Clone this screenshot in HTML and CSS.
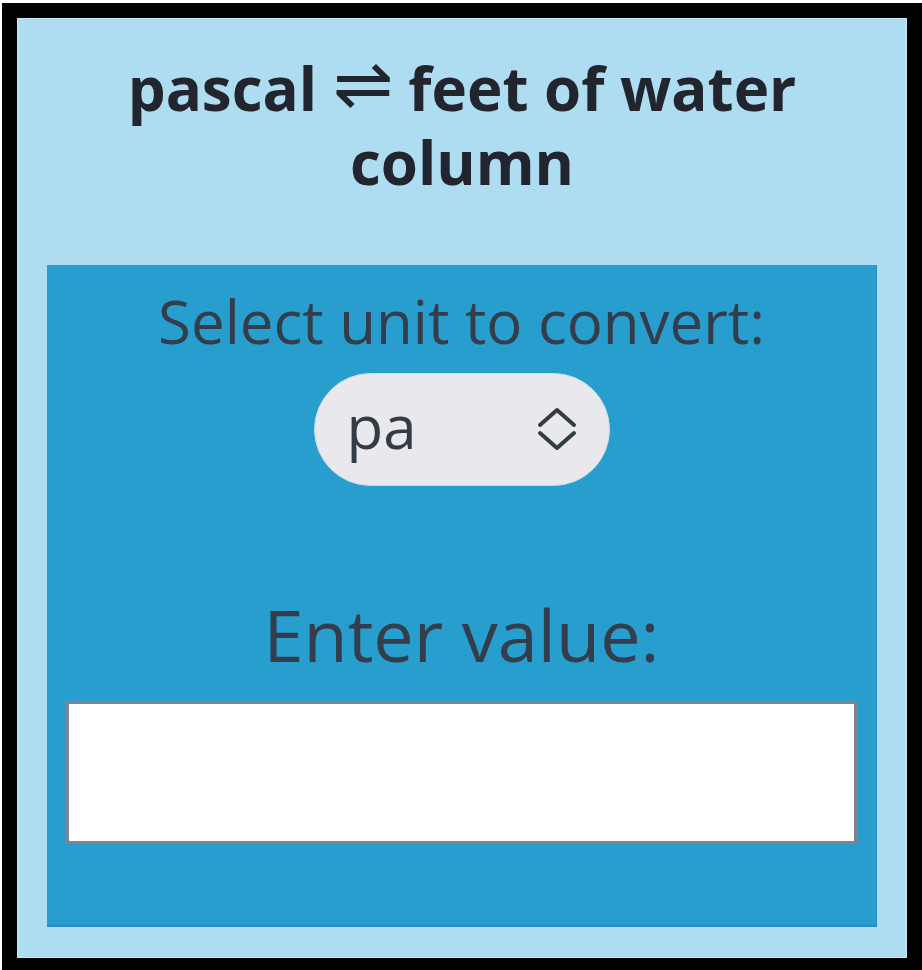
FILE: index.html
```html
<!DOCTYPE html>
<html lang="en">
<head>
<meta charset="utf-8">
<title>pascal ⇌ feet of water column</title>
<link rel="stylesheet" href="styles.css">
</head>
<body>
<div class="frame">
  <h1 class="title">pascal <span class="arrow">⇌</span> feet of water column</h1>
  <div class="panel">
    <label class="label-unit" for="unit">Select unit to convert:</label>
    <div class="select-wrap">
      <select id="unit" class="unit-select">
        <option>pa</option>
        <option>ftH2O</option>
      </select>
      <svg class="chevrons" width="40" height="44" viewBox="0 0 40 44" aria-hidden="true">
        <path d="M3 18 L20 3 L37 18" fill="none" stroke="#333b45" stroke-width="4" stroke-linecap="round" stroke-linejoin="round"/>
        <path d="M3 26 L20 41 L37 26" fill="none" stroke="#333b45" stroke-width="4" stroke-linecap="round" stroke-linejoin="round"/>
      </svg>
    </div>
    <label class="label-value" for="value">Enter value:</label>
    <input id="value" class="value-input" type="text">
  </div>
</div>
</body>
</html>
```
FILE: styles.css
```css
html, body {
  margin: 0;
  padding: 0;
  background: #ffffff;
}
body {
  font-family: "Open Sans", "Noto Sans", sans-serif;
  padding: 3px 0 0 2px;
  overflow: hidden;
}
.frame {
  box-sizing: border-box;
  width: 922px;
  height: 970px;
  border: 15px solid #000;
  border-right-width: 17px;
  background: #aedcf0;
  padding: 33px 30px 31px 30px;
  display: flex;
  flex-direction: column;
  box-shadow: inset 0 0 0 1px #c6e9f8;
}
.title {
  margin: 0;
  text-align: center;
  font-weight: 700;
  font-size: 60px;
  line-height: 74px;
  color: #22252d;
}
.arrow {
  font-family: "DejaVu Sans", sans-serif;
  font-weight: 200;
  font-size: 72px;
  line-height: 0;
  vertical-align: 2px;
}
.panel {
  margin-top: 66px;
  flex: 1;
  background: #279ecd;
  border-right: 1px solid #2a8cc0;
  border-bottom: 2px solid #2a8cc0;
  padding: 21px 0 0 0;
  display: flex;
  flex-direction: column;
  align-items: center;
}
.label-unit {
  font-size: 60px;
  line-height: 70px;
  color: #333d4b;
}
.select-wrap {
  position: relative;
  margin-top: 17px;
  width: 296px;
  height: 113px;
}
.unit-select {
  appearance: none;
  -webkit-appearance: none;
  box-sizing: border-box;
  width: 100%;
  height: 100%;
  border: 1px solid #c9dde6;
  border-radius: 57px;
  background: #e9e9ed;
  padding: 0 0 8px 32px;
  font-family: "Open Sans", "Noto Sans", sans-serif;
  font-size: 60px;
  color: #333b45;
  outline: none;
}
.chevrons {
  position: absolute;
  left: 223px;
  top: 34px;
  pointer-events: none;
}
.label-value {
  margin-top: 108px;
  font-size: 72px;
  line-height: 80px;
  color: #333d4b;
}
.value-input {
  box-sizing: border-box;
  margin-top: 27px;
  width: 791px;
  height: 143px;
  border: 3px solid #7d8590;
  background: #fff;
  font-size: 48px;
}
```
